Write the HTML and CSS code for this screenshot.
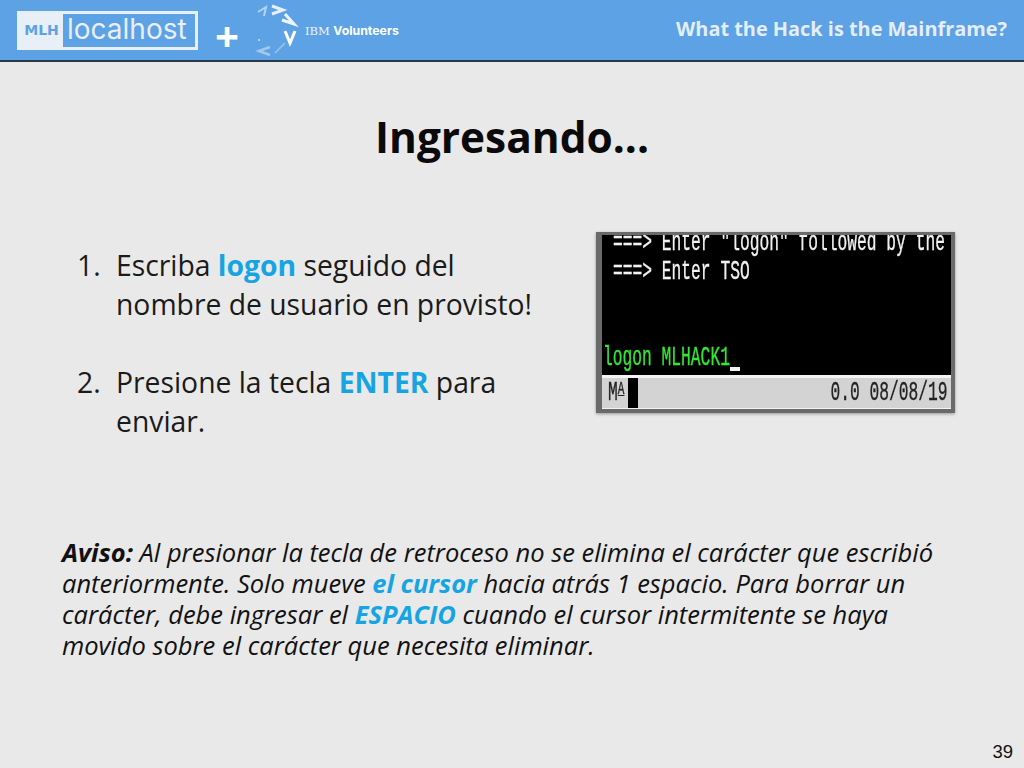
FILE: index.html
```html
<!DOCTYPE html>
<html lang="es">
<head>
<meta charset="utf-8">
<title>Ingresando...</title>
<link rel="stylesheet" href="styles.css">
</head>
<body>
<div class="slide">
  <header class="topbar">
    <div class="logos">
      <div class="mlh">
        <span class="mlh-tag">MLH</span>
        <span class="mlh-name">localhost</span>
      </div>
      <span class="plus">+</span>
      <svg class="ibm-mark" width="56" height="58" viewBox="0 0 56 58" fill="none" stroke-width="2.6">
        <path d="M6 11 L14 6 L12 15" stroke="#b5d3f2" stroke-width="2"/>
        <path d="M20 5 L31 9 L20 13" stroke="#e6f0fb" stroke-width="3"/>
        <path d="M33 13 L42 23 L30 19" stroke="#eef5fc" stroke-width="3"/>
        <path d="M33 30 L38 42 L43 30" stroke="#ffffff" stroke-width="3"/>
        <path d="M6 39 h2" stroke="#cfe1f5" stroke-width="1.6"/>
        <path d="M33 42 L23 52" stroke="#8fbce9" stroke-width="2"/>
        <path d="M18 46 L7 50 L18 54" stroke="#a3c8ee"/>
      </svg>
      <span class="ibm-text"><span class="ibm-word">IBM</span> <b>Volunteers</b></span>
    </div>
    <div class="deck-title">What the Hack is the Mainframe?</div>
  </header>

  <h1 class="title">Ingresando...</h1>

  <section class="content">
    <ol class="steps">
      <li>Escriba <b class="hl">logon</b> seguido del nombre de usuario en provisto!</li>
      <li>Presione la tecla <b class="hl">ENTER</b> para enviar.</li>
    </ol>
    <div class="terminal">
      <div class="screen">
        <div class="line white">===&gt; Enter "logon" followed by the</div>
        <div class="line white second">===&gt; Enter TSO</div>
        <div class="line green input">logon MLHACK1</div>
        <span class="cursor"></span>
      </div>
      <div class="status">
        <span class="line ma">M<u class="ma-sup">A</u></span>
        <span class="block"></span>
        <span class="line pos">0.0 08/08/19</span>
      </div>
    </div>
  </section>

  <p class="note"><b>Aviso:</b> Al presionar la tecla de retroceso no se elimina el carácter que escribió anteriormente. Solo mueve <b class="hl">el cursor</b> hacia atrás 1 espacio. Para borrar un carácter, debe ingresar el <b class="hl">ESPACIO</b> cuando el cursor intermitente se haya movido sobre el carácter que necesita eliminar.</p>

  <div class="page-no">39</div>
</div>
</body>
</html>
```
FILE: styles.css
```css
* { box-sizing: border-box; }
html, body { margin: 0; padding: 0; }
body { width: 1024px; height: 768px; overflow: hidden; background: #e9e9e9; font-family: "Open Sans", sans-serif; color: #111; }
.slide { width: 1024px; height: 768px; display: flex; flex-direction: column; position: relative; }

.topbar { height: 62px; flex: none; background: #5da2e4; border-bottom: 2px solid #2b3a4a; display: flex; justify-content: space-between; align-items: center; padding: 0 17px; }
.logos { display: flex; align-items: center; }
.mlh { width: 181px; height: 39px; background: #e8eff7; display: flex; align-items: stretch; padding: 3px; }
.mlh-tag { width: 43px; font: 700 14px "DejaVu Sans", sans-serif; color: #5da2e4; display: flex; align-items: center; justify-content: center; }
.mlh-name { flex: 1; background: #5da2e4; color: #e8eff7; font: 400 28px/31px "Inter", sans-serif; padding-left: 4px; white-space: nowrap; }
.plus { font: 700 42px/1 "Open Sans", sans-serif; color: #fff; margin: 12px 0 0 17px; width: 24px; text-align: center; }
.ibm-mark { margin-left: 13px; flex: none; }
.ibm-text { font: 400 12.3px "Inter", sans-serif; color: #eef5fc; margin-left: -3px; margin-top: 1px; white-space: nowrap; }
.ibm-word { font: 400 11.5px "DejaVu Serif", serif; }
.ibm-text b { font-weight: 700; color: #fff; }
.deck-title { font-weight: 700; font-size: 19.9px; color: #e4eefa; margin-top: -4px; }

.title { margin: 50px 0 0; text-align: center; font-size: 42.4px; line-height: 50px; font-weight: 700; color: #0a0a0a; }

.content { display: flex; justify-content: space-between; align-items: flex-start; margin-top: 70px; padding: 0 69px 0 77px; height: 235px; }
.steps { margin: 14px 0 0; padding: 0 0 0 39px; width: 470px; font-size: 28.3px; line-height: 39px; color: #1a1a1a; list-style: none; counter-reset: step; }
.steps li { margin-bottom: 39px; counter-increment: step; }
.steps li::before { content: counter(step) "."; display: inline-block; width: 39px; margin-left: -39px; }
.hl { color: #16a5e2; font-weight: 700; }

.terminal { width: 359px; height: 181px; background: #d3d3d3; border-style: solid; border-color: #6a6a6a; border-width: 3px 4px 4px 6px; box-shadow: 0 1px 3px rgba(0,0,0,.35); display: flex; flex-direction: column; overflow: hidden; flex: none; }
.screen { height: 140px; flex: none; background: #000; position: relative; overflow: hidden; }
.line { font: 400 28px/1 "Liberation Mono", monospace; -webkit-text-stroke: .35px currentColor; display: block; white-space: nowrap; transform: scaleX(.581); transform-origin: left center; filter: blur(.3px); }
.white { color: #f2f2f2; margin-left: 11px; margin-top: -6px; }
.second { margin-top: 1px; }
.green { color: #33e833; }
.input { position: absolute; left: 1px; top: 109px; }
.cursor { position: absolute; left: 128px; top: 132px; width: 10px; height: 4px; background: #f2f2f2; }
.status { flex: 1; background: #d3d3d3; border-top: 3px solid #f4f4f4; border-bottom: 2px solid #f4f4f4; margin-left: -3px; display: flex; align-items: center; padding-left: 9px; padding-right: 3px; color: #222; }
.ma { width: 20px; flex: none; }
.ma-sup { font-size: 19px; vertical-align: 6px; }
.block { width: 10px; height: 30px; background: #000; flex: none; }
.pos { margin-left: auto; flex: none; transform-origin: right center; }

.note { margin: 70px 0 0; padding: 0 0 0 62px; width: 960px; font-size: 25.5px; line-height: 31px; font-style: italic; color: #111; }
.note b { font-weight: 700; }
.page-no { position: absolute; right: 11px; top: 741px; font: 400 18.5px/22px "Liberation Sans", sans-serif; color: #111; }
```
